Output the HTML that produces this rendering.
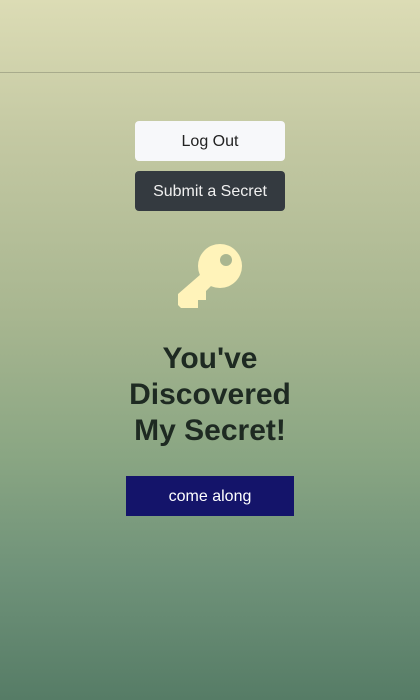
<!DOCTYPE html>
<html><head><style>
html,body{margin:0;padding:0}
body{width:420px;height:700px;overflow:hidden;font-family:"Liberation Sans",sans-serif;
background:linear-gradient(180deg,#dcdcb5 0%,#c3c8a2 20%,#a8b690 45%,#8aa683 65%,#6f9279 82%,#567c66 100%);position:relative}
.hdr{position:absolute;left:0;top:0;width:420px;height:72px;border-bottom:1px solid #a8ab8c}
.btn{position:absolute;left:135px;width:150px;height:40px;border-radius:4px;font-size:16px;text-align:center;line-height:42px}
h1{position:absolute;top:341px;left:0;width:420px;margin:0;text-align:center;font-size:30px;line-height:36px;color:#1e2a22;font-weight:bold}
.go{position:absolute;left:126px;top:476px;width:168px;height:40px;background:#14146a;color:#fff;font-size:16px;text-align:center;line-height:42px}
</style></head><body>
<div class="hdr"></div>
<div class="btn" style="top:121px;background:#f7f8fa;color:#222">Log Out</div>
<div class="btn" style="top:171px;background:#343a40;color:#f0f0f0">Submit a Secret</div>
<svg style="position:absolute;left:0;top:0" width="420" height="700">
<g fill="#fff3ba">
<circle cx="220" cy="266" r="22"/>
<polygon points="201,274 212,285 206,291 206,300 198,300 198,308 181,308 178,305 178,294"/>
</g>
<circle cx="226" cy="260" r="6" fill="#aab690"/>
</svg>
<h1>You've<br>Discovered<br>My Secret!</h1>
<div class="go">come along</div>
</body></html>
